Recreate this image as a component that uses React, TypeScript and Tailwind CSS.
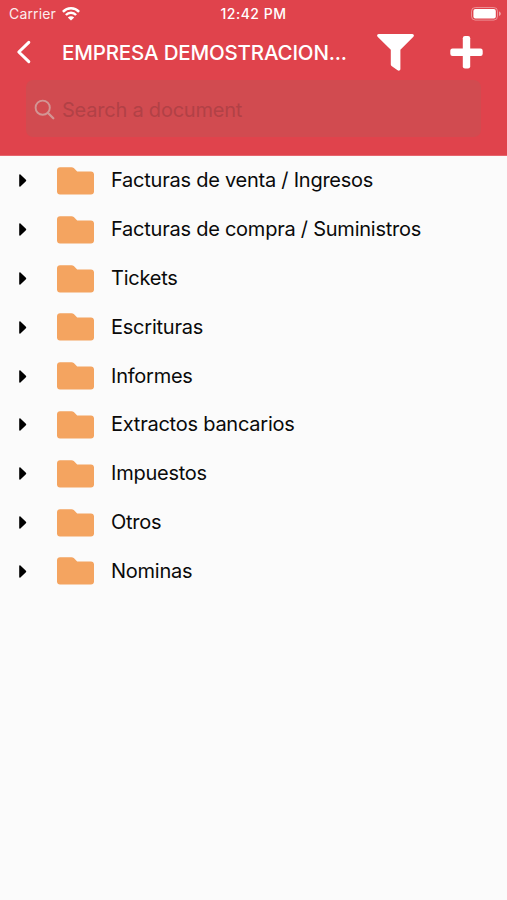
const folders = [
  'Facturas de venta / Ingresos',
  'Facturas de compra / Suministros',
  'Tickets',
  'Escrituras',
  'Informes',
  'Extractos bancarios',
  'Impuestos',
  'Otros',
  'Nominas',
];

function WifiIcon() {
  return (
    <svg className="ml-[6px] h-[14px] w-[18px]" viewBox="0 0 18 14" fill="none" stroke="currentColor" strokeWidth="2.5">
      <path d="M0.9 4.8C5.4 0.2 12.6 0.2 17.1 4.8" />
      <path d="M3.9 8C6.7 5.1 11.3 5.1 14.1 8" />
      <path d="M9 13.5L5.8 10.4C7.6 8.8 10.4 8.8 12.2 10.4Z" fill="currentColor" stroke="none" />
    </svg>
  );
}

function BatteryIcon() {
  return (
    <svg className="h-[14px] w-[31px]" viewBox="0 0 31 14" fill="none">
      <rect x="0.5" y="0.5" width="26" height="12.6" rx="3.8" stroke="white" strokeOpacity="0.4" />
      <rect x="2.4" y="2" width="22.4" height="9.6" rx="2" fill="white" />
      <path d="M28 4.5C30.4 5.2 30.4 8.2 28 8.9Z" fill="white" fillOpacity="0.5" />
    </svg>
  );
}

function StatusBar() {
  return (
    <div className="flex h-[27px] items-center justify-between pl-[9px] pr-[5px] text-[14px] leading-none">
      <div className="flex w-[211px] items-center">
        <span className="mt-px w-[47px] whitespace-nowrap tracking-[0.15px] opacity-90">Carrier</span>
        <WifiIcon />
      </div>
      <span className="whitespace-nowrap font-medium tracking-[0.5px]">12:42 PM</span>
      <div className="flex w-[215px] justify-end">
        <BatteryIcon />
      </div>
    </div>
  );
}

function NavBar() {
  return (
    <div className="flex h-[50px] items-center pl-[16px]">
      <button className="h-[24px] w-[15px]" aria-label="Back">
        <svg className="h-[24px] w-[15px]" viewBox="0 0 15 24" fill="none" stroke="currentColor" strokeWidth="3" strokeLinecap="round" strokeLinejoin="round">
          <path d="M12.8 2.3L2.8 12L12.8 21.7" />
        </svg>
      </button>
      <h1 className="ml-[31px] mt-[2px] w-[300px] whitespace-nowrap text-[20.5px] font-medium tracking-[-0.17px]">
        EMPRESA DEMOSTRACION...
      </h1>
      <button className="ml-[15px] h-[37px] w-[37px]" aria-label="Filter">
        <svg className="h-[37px] w-[37px]" viewBox="0 0 37 37" fill="currentColor">
          <path d="M1.7 0H35.3C36.8 0 37.4 1.7 36.4 2.7L23.4 15.8V34.9C23.4 36.4 21.8 37.1 20.6 36.3L14.9 32.3C14.2 31.8 13.8 31.3 13.8 30.5V15.8L0.6 2.7C-0.4 1.7 0.2 0 1.7 0Z" />
        </svg>
      </button>
      <button className="ml-[36px] h-[33px] w-[33px]" aria-label="Add">
        <svg className="h-[33px] w-[33px]" viewBox="0 0 33 33" fill="currentColor">
          <rect x="12.8" y="0" width="7.4" height="32.4" rx="2.2" />
          <rect x="0.3" y="12.5" width="32.4" height="7.4" rx="2.2" />
        </svg>
      </button>
    </div>
  );
}

function SearchField() {
  return (
    <div className="ml-[26px] mt-[3px] flex h-[57px] w-[455px] items-center rounded-[7px] bg-[#d14b50] pl-[8px] pt-[2px]">
      <svg className="h-[21px] w-[21px] text-[#d39594]" viewBox="0 0 21 21" fill="none" stroke="currentColor" strokeWidth="1.9" strokeLinecap="round">
        <circle cx="8.7" cy="8.7" r="7.1" />
        <path d="M14 14L19.3 19.3" strokeWidth="2.3" />
      </svg>
      <span className="ml-[7px] whitespace-nowrap text-[20px] tracking-[-0.22px] text-[#b14146]">
        Search a document
      </span>
    </div>
  );
}

function FolderRow({ name }: { name: string }) {
  return (
    <li className="flex h-[48.8px] items-center pl-[19px]">
      <svg className="h-[13px] w-[8px] text-black" viewBox="0 0 8 13" fill="currentColor">
        <path d="M0.2 1C0.2 0.3 0.9 0 1.4 0.5L6.9 5.7C7.4 6.2 7.4 6.8 6.9 7.3L1.4 12.5C0.9 13 0.2 12.7 0.2 12Z" />
      </svg>
      <svg className="ml-[30px] h-[28px] w-[37px] text-[#f4a460]" viewBox="0 0 37 28" fill="currentColor">
        <path d="M3 0.2H14.5C15.4 0.2 16.1 0.5 16.8 1.1L20.2 4.6H34C35.7 4.6 37 5.9 37 7.6V24.6C37 26.3 35.7 27.6 34 27.6H3C1.3 27.6 0 26.3 0 24.6V3.2C0 1.5 1.3 0.2 3 0.2Z" />
      </svg>
      <span className="mb-[1.2px] ml-[17px] whitespace-nowrap text-[20px] tracking-[-0.24px] text-[#0a0a0a]">{name}</span>
    </li>
  );
}

export default function App() {
  return (
    <div className="h-[900px] w-[507px] overflow-hidden bg-[#fbfbfb] font-['Inter',sans-serif]">
      <header className="h-[156px] border-b border-[#e6656d] bg-[#e0434c] text-white">
        <StatusBar />
        <NavBar />
        <SearchField />
      </header>
      <ul className="pt-[0.6px]">
        {folders.map(name => (
          <FolderRow key={name} name={name} />
        ))}
      </ul>
    </div>
  );
}
